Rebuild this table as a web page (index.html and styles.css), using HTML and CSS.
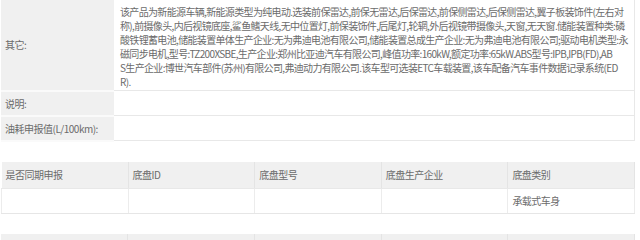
FILE: index.html
```html
<!DOCTYPE html>
<html lang="zh-CN">
<head>
<meta charset="utf-8">
<link rel="stylesheet" href="styles.css">
</head>
<body>
<div class="page">
  <table class="info">
    <tr class="tall">
      <th>其它:</th>
      <td class="notes">该产品为新能源车辆,新能源类型为纯电动.选装前保雷达,前保无雷达,后保雷达,前保侧雷达,后保侧雷达,翼子板装饰件(左右对<br>称),前摄像头,内后视镜底座,鲨鱼鳍天线,无中位置灯,前保装饰件,后尾灯,轮辋,外后视镜带摄像头,天窗,无天窗.储能装置种类:磷<br>酸铁锂蓄电池,储能装置单体生产企业:无为弗迪电池有限公司,储能装置总成生产企业:无为弗迪电池有限公司;驱动电机类型:永<br>磁同步电机,型号:TZ200XSBE,生产企业:郑州比亚迪汽车有限公司,峰值功率:160kW,额定功率:65kW.ABS型号:IPB,IPB(FD),AB<br>S生产企业:博世汽车部件(苏州)有限公司,弗迪动力有限公司.该车型可选装ETC车载装置,该车配备汽车事件数据记录系统(ED<br>R).</td>
    </tr>
    <tr>
      <th>说明:</th>
      <td></td>
    </tr>
    <tr>
      <th>油耗申报值(L/100km):</th>
      <td></td>
    </tr>
  </table>

  <table class="grid">
    <tr>
      <th>是否同期申报</th>
      <th>底盘ID</th>
      <th>底盘型号</th>
      <th>底盘生产企业</th>
      <th>底盘类别</th>
    </tr>
    <tr>
      <td></td>
      <td></td>
      <td></td>
      <td></td>
      <td>承载式车身</td>
    </tr>
  </table>

  <table class="grid">
    <tr>
      <th></th>
      <th></th>
      <th></th>
      <th></th>
      <th></th>
    </tr>
  </table>
</div>
</body>
</html>
```

FILE: styles.css
```css
html, body {
  margin: 0;
  padding: 0;
  background: #ffffff;
}

body {
  font-family: "Noto Sans CJK SC", "Noto Sans", sans-serif;
  font-size: 10px;
  letter-spacing: -0.5px;
  color: #6b6b6b;
}

.page {
  width: 634px;
  padding-left: 1px;
  display: flex;
  flex-direction: column;
  gap: 20px;
}

table {
  width: 100%;
  border-collapse: collapse;
  table-layout: fixed;
}

th, td {
  font-weight: normal;
  text-align: left;
  vertical-align: middle;
}

.info th {
  width: 104px;
  padding: 0 5px 0 4px;
  background: #f0f0f0;
  border-bottom: 2px solid #fafafa;
  white-space: nowrap;
}

.info td {
  padding: 5px 5px 1px 6px;
  line-height: 14px;
  border-bottom: 1px solid #e8e8e8;
  border-right: 1px solid #e8e8e8;
}

.info td.notes {
  white-space: nowrap;
  letter-spacing: -0.66px;
}

.info tr {
  height: 25px;
}

.info tr.tall {
  height: 90px;
}

.grid th {
  height: 26px;
  padding: 0 4px;
  background: #f0f0f0;
  border-right: 1px solid #e4e4e4;
  border-bottom: 1px solid #e8e8e8;
}

.grid td {
  height: 24px;
  padding: 0 4px;
  border-left: 1px solid #ececec;
  border-right: 1px solid #ececec;
  border-bottom: 1px solid #e6e6e6;
}
```
